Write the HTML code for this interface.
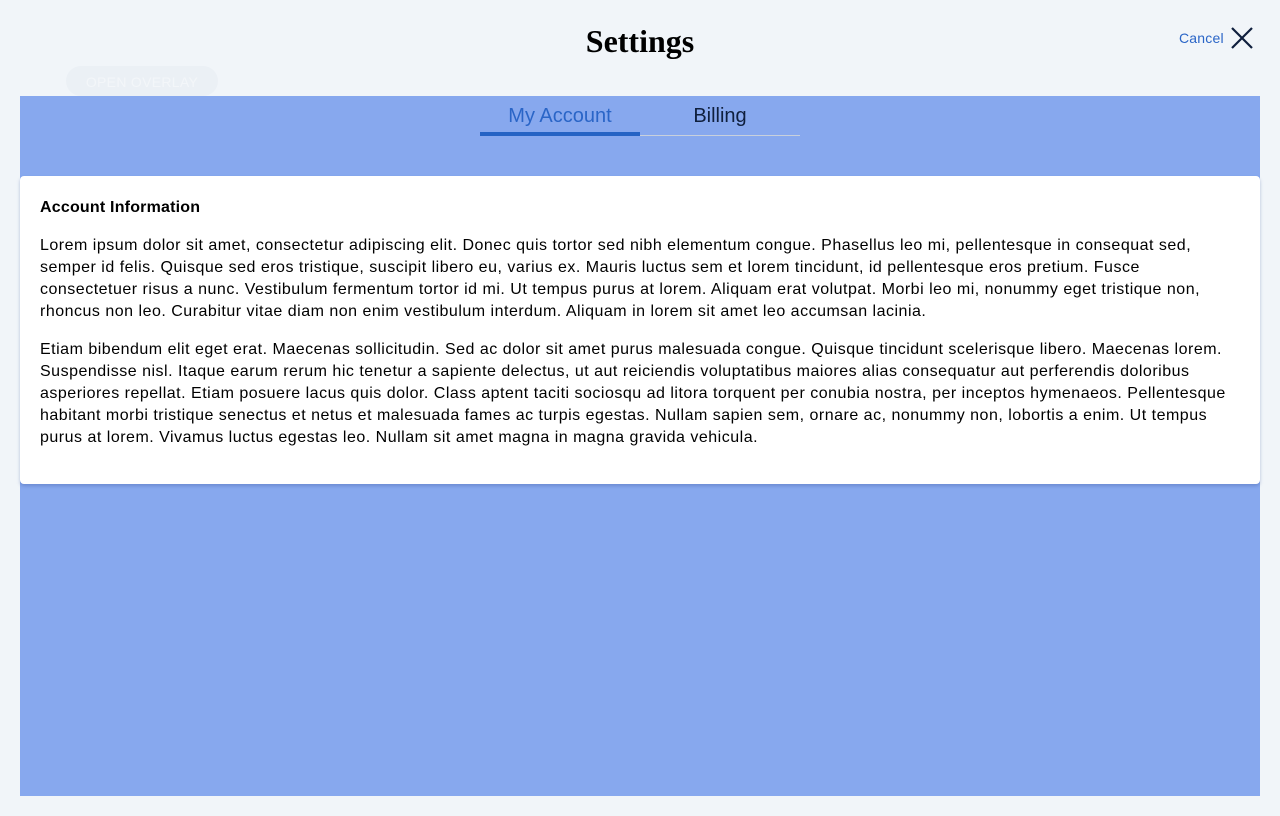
<!DOCTYPE html>
<html><head><style>
html,body{margin:0;padding:0;}
body{width:1280px;height:816px;background:#f1f5f9;position:relative;font-family:"Liberation Sans",sans-serif;overflow:hidden;}
h1{position:absolute;top:21px;left:0;width:1280px;text-align:center;margin:0;font-family:"Liberation Serif",serif;font-size:32px;font-weight:bold;color:#000;line-height:40px;}
.cancel{position:absolute;left:1179px;top:30px;font-size:14px;color:#2a65c7;line-height:16px;letter-spacing:0.2px;}
.x{position:absolute;left:1231px;top:27px;}
.pill{position:absolute;left:66px;top:66px;width:152px;height:30px;border-radius:15px;background:#ebf0f5;color:#f3f6f9;font-size:14px;line-height:32px;text-align:center;letter-spacing:0.3px;}
.panel{position:absolute;left:20px;top:96px;width:1240px;height:700px;background:#87a8ee;}
.tab{position:absolute;top:0;width:160px;height:38px;text-align:center;font-size:20px;line-height:40px;}
.t1{left:460px;color:#2a65c7;border-bottom:4px solid #2563c4;height:36px;}
.t2{left:620px;color:#0f1f3d;border-bottom:1px solid #c8d0dc;height:39px;}
.card{position:absolute;left:0;top:80px;width:1240px;height:308px;background:#fff;border-radius:4px;box-shadow:0 2px 3px rgba(60,90,160,.35);box-sizing:border-box;padding:22px 20px;}
.card h3{margin:0 0 17px;font-size:16px;line-height:20px;font-weight:bold;color:#000;letter-spacing:0.2px;}
.card p{margin:0 0 16px;font-size:16px;line-height:22px;color:#000;letter-spacing:0.5px;}
</style></head><body>
<h1>Settings</h1>
<div class="cancel">Cancel</div>
<svg class="x" width="22" height="22" viewBox="0 0 22 22"><path d="M1 1L21 21M21 1L1 21" stroke="#0f1f3d" stroke-width="2.2"/></svg>
<div class="pill">OPEN OVERLAY</div>
<div class="panel">
<div class="tab t1">My Account</div>
<div class="tab t2">Billing</div>
<div class="card">
<h3>Account Information</h3>
<p>Lorem ipsum dolor sit amet, consectetur adipiscing elit. Donec quis tortor sed nibh elementum congue. Phasellus leo mi, pellentesque in consequat sed, semper id felis. Quisque sed eros tristique, suscipit libero eu, varius ex. Mauris luctus sem et lorem tincidunt, id pellentesque eros pretium. Fusce consectetuer risus a nunc. Vestibulum fermentum tortor id mi. Ut tempus purus at lorem. Aliquam erat volutpat. Morbi leo mi, nonummy eget tristique non, rhoncus non leo. Curabitur vitae diam non enim vestibulum interdum. Aliquam in lorem sit amet leo accumsan lacinia.</p>
<p>Etiam bibendum elit eget erat. Maecenas sollicitudin. Sed ac dolor sit amet purus malesuada congue. Quisque tincidunt scelerisque libero. Maecenas lorem. Suspendisse nisl. Itaque earum rerum hic tenetur a sapiente delectus, ut aut reiciendis voluptatibus maiores alias consequatur aut perferendis doloribus asperiores repellat. Etiam posuere lacus quis dolor. Class aptent taciti sociosqu ad litora torquent per conubia nostra, per inceptos hymenaeos. Pellentesque habitant morbi tristique senectus et netus et malesuada fames ac turpis egestas. Nullam sapien sem, ornare ac, nonummy non, lobortis a enim. Ut tempus purus at lorem. Vivamus luctus egestas leo. Nullam sit amet magna in magna gravida vehicula.</p>
</div>
</div>
</body></html>
